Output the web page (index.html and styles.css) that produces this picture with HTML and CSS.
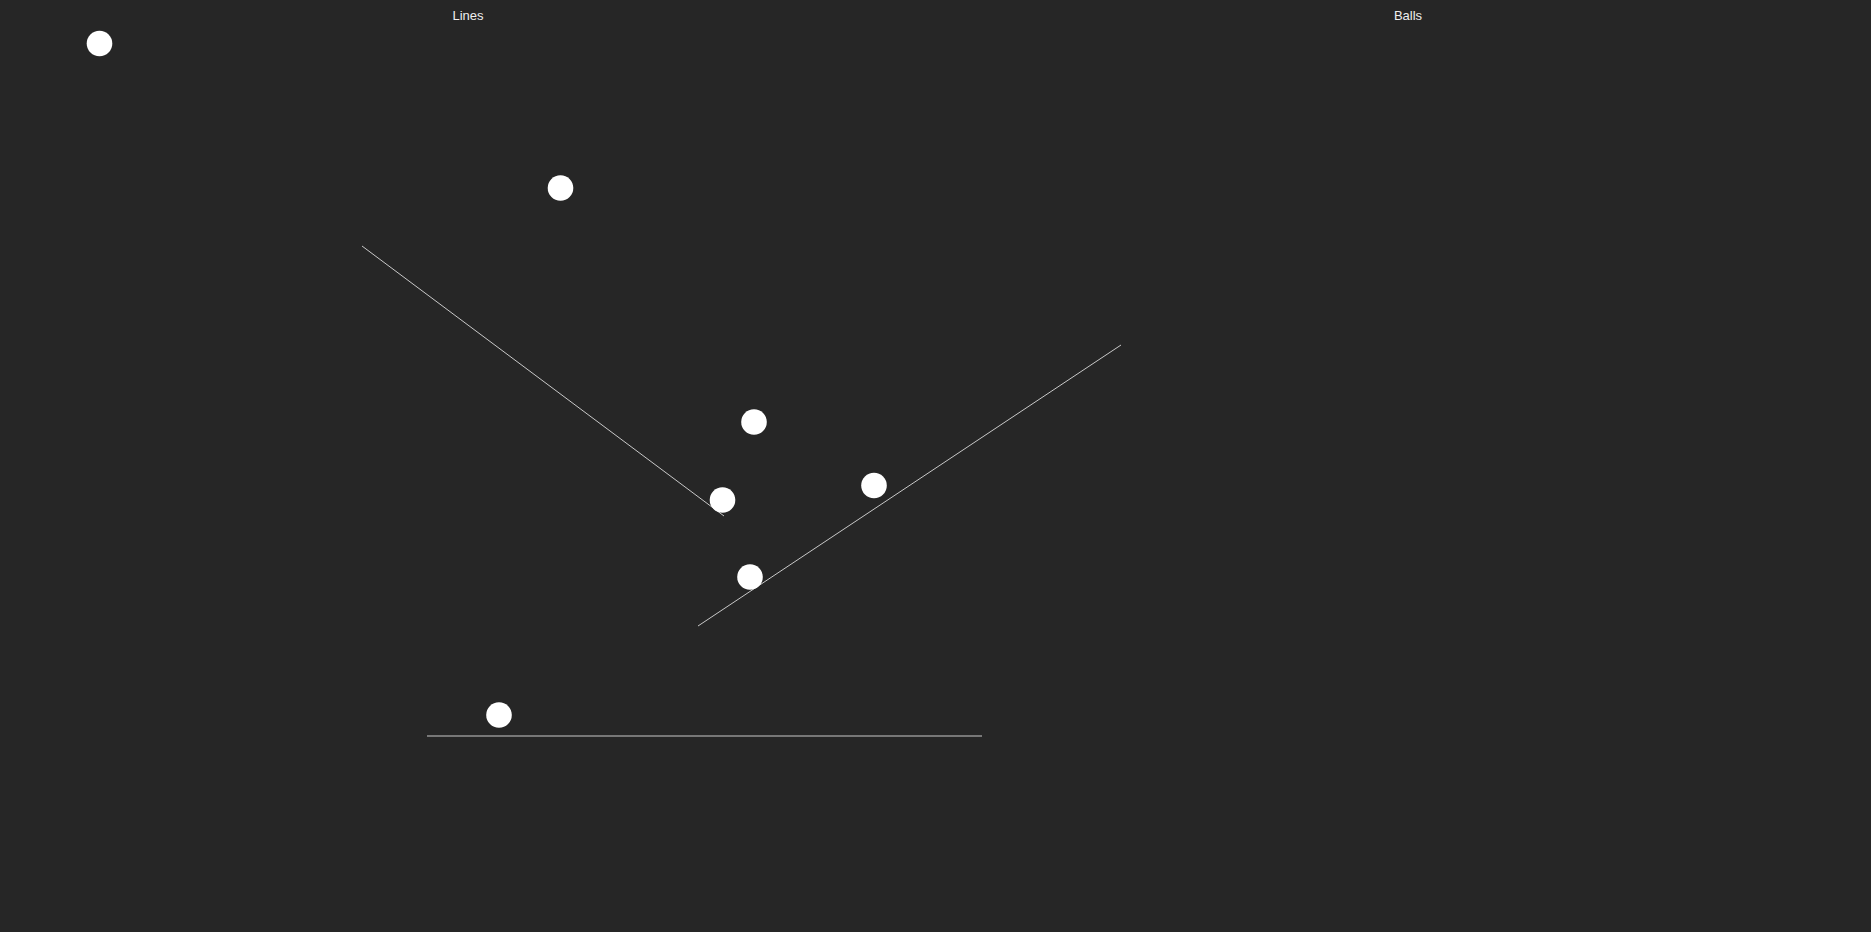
FILE: index.html
```html
<!DOCTYPE html>
<html lang="en">
<head>
    <meta charset="UTF-8">
    <meta name="viewport" content="width=device-width, initial-scale=1.0">
    <title>Lines and Balls</title>
    <link rel="stylesheet" href="styles.css">
</head>
<body>
    <!-- Simulation area -->
    <svg class="stage" width="1871" height="932" viewBox="0 0 1871 932">
        <g class="lines">
            <line x1="362" y1="246" x2="724" y2="516"></line>
            <line x1="698" y1="626" x2="1121" y2="345"></line>
            <line x1="427" y1="736" x2="982" y2="736"></line>
        </g>
        <g class="balls">
            <circle cx="99.5" cy="43.5" r="12.8"></circle>
            <circle cx="560.5" cy="188" r="12.8"></circle>
            <circle cx="754" cy="422" r="12.8"></circle>
            <circle cx="722.5" cy="500" r="12.8"></circle>
            <circle cx="874" cy="485.5" r="12.8"></circle>
            <circle cx="750" cy="577" r="12.8"></circle>
            <circle cx="499" cy="715" r="12.8"></circle>
        </g>
    </svg>

    <!-- Panel labels -->
    <div class="labels">
        <div class="label">Lines</div>
        <div class="label label-right">Balls</div>
    </div>
</body>
</html>
```

FILE: styles.css
```css
body {
    margin: 0;
    height: 100vh;
    overflow: hidden;
    background-color: #262626;
    font-family: Arial, "Liberation Sans", sans-serif;
    color: #eeeeee;
}

.stage {
    position: absolute;
    top: 0;
    left: 0;
}

.lines line {
    stroke: #ffffff;
    stroke-width: 1;
    opacity: 0.75;
}

.balls circle {
    fill: #ffffff;
}

.labels {
    position: relative;
    display: grid;
    grid-template-columns: 936px 1fr;
    padding-top: 8px;
    font-size: 13px;
}

.label {
    text-align: center;
}

.label-right {
    padding-left: 9px;
}
```
